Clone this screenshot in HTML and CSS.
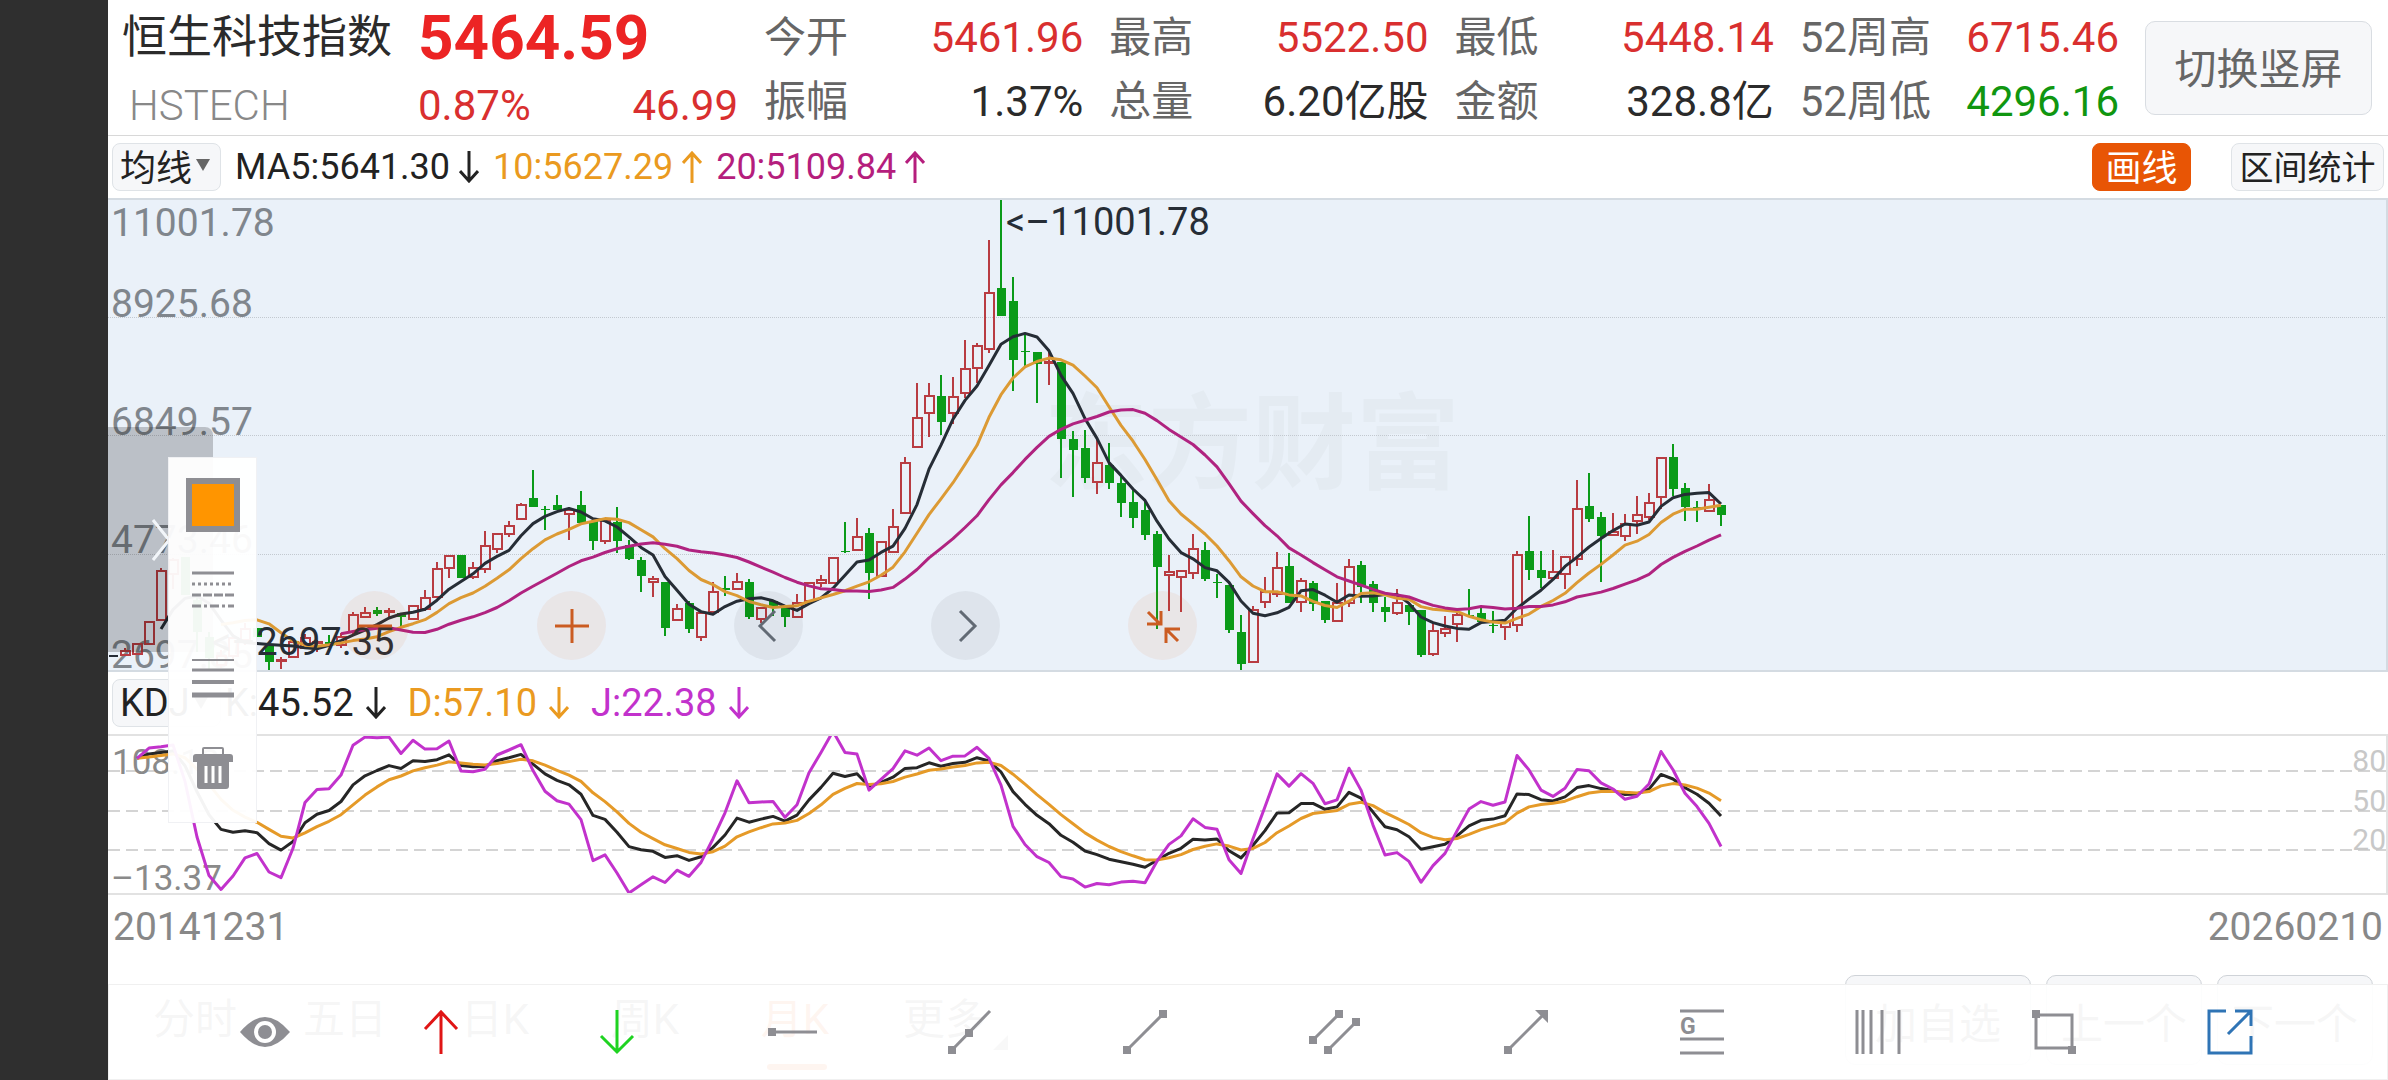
FILE: index.html
```html
<!DOCTYPE html>
<html lang="zh-CN">
<head>
<meta charset="utf-8">
<meta name="viewport" content="width=device-width, initial-scale=1">
<title>恒生科技指数 HSTECH</title>
<link rel="stylesheet" href="styles.css">
</head>
<body>
<div class="notch"></div>
<main class="screen">
  <header class="quote">
    <div class="name">
      <h1 class="name-title">恒生科技指数</h1>
      <div class="name-code">HSTECH</div>
    </div>
    <div class="price up">
      <strong class="price-last">5464.59</strong>
      <div class="price-change"><span>0.87%</span><span>46.99</span></div>
    </div>
    <dl class="stats">
      <div class="stat"><dt>今开</dt><dd class="up">5461.96</dd></div>
      <div class="stat"><dt>最高</dt><dd class="up">5522.50</dd></div>
      <div class="stat"><dt>最低</dt><dd class="up">5448.14</dd></div>
      <div class="stat"><dt>52周高</dt><dd class="up">6715.46</dd></div>
      <div class="stat"><dt>振幅</dt><dd>1.37%</dd></div>
      <div class="stat"><dt>总量</dt><dd>6.20亿股</dd></div>
      <div class="stat"><dt>金额</dt><dd>328.8亿</dd></div>
      <div class="stat"><dt>52周低</dt><dd class="down">4296.16</dd></div>
    </dl>
    <button class="rotate" type="button">切换竖屏</button>
  </header>

  <div class="indicator">
    <button class="chip chip-menu" type="button">均线<svg class="caret" viewBox="0 0 14 12"><path d="M0 0h14L7 12z"/></svg></button>
    <span class="reading ink">MA5:5641.30<svg class="arrow" viewBox="0 0 20 32"><path d="M10 0v30M1 20l9 10 9-10"/></svg></span>
    <span class="reading amber">10:5627.29<svg class="arrow" viewBox="0 0 20 32"><path d="M10 32V2M1 12l9-10 9 10"/></svg></span>
    <span class="reading magenta">20:5109.84<svg class="arrow" viewBox="0 0 20 32"><path d="M10 32V2M1 12l9-10 9 10"/></svg></span>
    <button class="chip chip-active" type="button">画线</button>
    <button class="chip chip-range" type="button">区间统计</button>
  </div>

  <section class="plot plot-main">
    <svg class="canvas canvas-main" id="price"></svg>
    <div class="controls">
      <button class="round warm" type="button" aria-label="缩小"><svg viewBox="0 0 34 34"><path d="M0 17h34"/></svg></button>
      <button class="round warm" type="button" aria-label="放大"><svg viewBox="0 0 34 34"><path d="M0 17h34M17 0v34"/></svg></button>
      <button class="round" type="button" aria-label="向左"><svg viewBox="0 0 34 34"><path d="M23 2L8 17l15 15"/></svg></button>
      <button class="round" type="button" aria-label="向右"><svg viewBox="0 0 34 34"><path d="M11 2l15 15-15 15"/></svg></button>
      <button class="round warm" type="button" aria-label="收起"><svg viewBox="0 0 34 34"><path d="M2 3l12 12M1 15h14V2M32 32L20 20M20 34V20h14"/></svg></button>
    </div>
  </section>

  <div class="indicator indicator-kdj">
    <button class="chip chip-menu" type="button">KDJ<svg class="caret" viewBox="0 0 14 12"><path d="M0 0h14L7 12z"/></svg></button>
    <span class="reading ink">K:45.52<svg class="arrow" viewBox="0 0 20 32"><path d="M10 0v30M1 20l9 10 9-10"/></svg></span>
    <span class="reading amber">D:57.10<svg class="arrow" viewBox="0 0 20 32"><path d="M10 0v30M1 20l9 10 9-10"/></svg></span>
    <span class="reading violet">J:22.38<svg class="arrow" viewBox="0 0 20 32"><path d="M10 0v30M1 20l9 10 9-10"/></svg></span>
  </div>

  <section class="plot plot-kdj">
    <svg class="canvas canvas-kdj" id="kdj"></svg>
  </section>

  <div class="dates"><span>20141231</span><span>20260210</span></div>

  <nav class="periods">
    <a class="period" href="#">分时</a>
    <a class="period" href="#">五日</a>
    <a class="period" href="#">日K</a>
    <a class="period" href="#">周K</a>
    <a class="period period-on" href="#">月K</a>
    <a class="period period-more" href="#">更多</a>
    <div class="steps">
      <button class="step" type="button">加自选</button>
      <button class="step" type="button">上一个</button>
      <button class="step" type="button">下一个</button>
    </div>
  </nav>

  <button class="handle" type="button" aria-label="收起面板"><svg viewBox="0 0 18 42"><path d="M1 1l16 20L1 41"/></svg></button>
  <aside class="styles">
    <button class="tool swatch" type="button" aria-label="颜色"></button>
    <button class="tool" type="button" aria-label="线型"><svg class="lines" viewBox="0 0 42 38"><path stroke-width="3" d="M0 2h42"/><path stroke-width="3" stroke-dasharray="3 3" d="M0 13h42"/><path stroke-width="3" stroke-dasharray="9 2" d="M0 24h42"/><path stroke-width="3" stroke-dasharray="9 3 3 3" d="M0 35h42"/></svg></button>
    <button class="tool" type="button" aria-label="线宽"><svg class="lines" viewBox="0 0 42 40"><path stroke-width="2" d="M0 1h42"/><path stroke-width="3" d="M0 11h42"/><path stroke-width="4" d="M0 23h42"/><path stroke-width="5" d="M0 36h42"/></svg></button>
    <button class="tool" type="button" aria-label="删除"><svg class="trash" viewBox="0 0 42 44"><path fill="none" stroke="#8e8e93" stroke-width="2" d="M11 9V3q0-1 1-1h18q1 0 1 1v6"/><path d="M1 11q0-3 3-3h34q3 0 3 3v5H1zM5 16h32v24q0 3-3 3H8q-3 0-3-3z"/><path stroke="#fff" stroke-width="3" d="M14 20v17M21 20v17M28 20v17"/></svg></button>
  </aside>

  <div class="toolbar">
    <button class="draw" type="button" aria-label="显示"><svg viewBox="0 0 44 44"><path class="fill" d="M-3 22Q10 7 22 7t25 15Q34 37 22 37T-3 22z"/><ellipse cx="22" cy="22" rx="11" ry="11" fill="#fff"/><circle class="fill" cx="22" cy="22" r="7"/></svg></button>
    <button class="draw" type="button" aria-label="看涨"><svg class="red" viewBox="0 0 44 44"><path d="M22 44V2M6 19L22 2l16 17"/></svg></button>
    <button class="draw" type="button" aria-label="看跌"><svg class="green" viewBox="0 0 44 44"><path d="M22 0v42M6 26l16 16 16-16"/></svg></button>
    <button class="draw" type="button" aria-label="水平线"><svg viewBox="0 0 44 44"><path d="M0 22h46"/><path class="fill" d="M-3 18h8v8h-8z"/></svg></button>
    <button class="draw" type="button" aria-label="射线"><svg viewBox="0 0 44 44"><path d="M5 40L43 1"/><path class="fill" d="M1 36h8v8H1zM18 19h8v8h-8z"/></svg></button>
    <button class="draw" type="button" aria-label="线段"><svg viewBox="0 0 44 44"><path d="M4 40L40 4"/><path class="fill" d="M0 36h8v8H0zM36 0h8v8h-8z"/></svg></button>
    <button class="draw draw-wide" type="button" aria-label="平行线"><svg viewBox="0 0 44 44"><path d="M0 30L26 4M15 40l28-28"/><path class="fill" d="M-4 26h8v8h-8zM22 0h8v8h-8zM11 36h8v8h-8zM39 8h8v8h-8z"/></svg></button>
    <button class="draw" type="button" aria-label="箭头"><svg viewBox="0 0 44 44"><path d="M4 40L40 4"/><path class="fill" d="M0 36h8v8H0zM31 0h13v13z"/></svg></button>
    <button class="draw" type="button" aria-label="黄金分割"><svg viewBox="0 0 44 44"><path d="M0 1h44M0 29h44M0 43h44"/><text class="glyph" x="0" y="24">G</text></svg></button>
    <button class="draw" type="button" aria-label="周期线"><svg viewBox="0 0 44 44"><path d="M1 0v44M7 0v44M15 0v44M26 0v44M43 0v44"/></svg></button>
    <button class="draw" type="button" aria-label="矩形"><svg viewBox="0 0 44 44"><path d="M4 5h36v33H4z"/><path class="fill" d="M0 0h8v8H0zM36 36h8v8h-8z"/></svg></button>
    <button class="draw" type="button" aria-label="分享"><svg class="blue" viewBox="0 0 44 44"><path d="M18 1H1v42h42V26M27 1h16v15M20 24L43 1"/></svg></button>
  </div>
</main>
<script src="chart.js"></script>
</body>
</html>
```

FILE: styles.css
```css
* {
  box-sizing: border-box;
}

body {
  margin: 0;
  display: flex;
  min-height: 100vh;
  background: #fff;
  color: #2b2b2b;
  font-family: Roboto, "Noto Sans CJK SC", sans-serif;
  font-size: 42px;
}

button {
  margin: 0;
  padding: 0;
  border: 0;
  background: none;
  color: inherit;
  font-family: inherit;
  font-size: inherit;
}

svg {
  display: block;
}

.notch {
  flex: none;
  width: 108px;
  background: #2f2f2f;
}

.screen {
  position: relative;
  flex: 1;
  min-width: 0;
}

.up { color: #d92f2f; }
.down { color: #109610; }
.ink { color: #222; }
.amber { color: #ea9a20; }
.magenta { color: #b51e7d; }
.violet { color: #c232cc; }

/* Quote header */
.quote {
  display: flex;
  align-items: flex-start;
  gap: 26px;
  padding: 0 16px 0 14px;
  border-bottom: 1px solid #d8d8d8;
}

.name {
  width: 270px;
  white-space: nowrap;
}

.name-title {
  margin: 0;
  font-size: 45px;
  font-weight: 400;
  line-height: 76px;
}

.name-code {
  padding-left: 7px;
  color: #888;
  font-weight: 300;
  line-height: 59px;
}

.price {
  width: 320px;
}

.price-last {
  display: block;
  color: #ec2424;
  font-size: 62px;
  font-weight: 700;
  line-height: 76px;
}

.price-change {
  display: flex;
  justify-content: space-between;
  line-height: 59px;
}

.stats {
  flex: 1;
  display: grid;
  grid-template-columns: repeat(4, 1fr);
  column-gap: 26px;
  margin: 0;
  padding-top: 6px;
  line-height: 64px;
}

.stat {
  display: flex;
  justify-content: space-between;
}

.stat dt {
  color: #666;
}

.stat dd {
  margin: 0;
}

.rotate {
  align-self: center;
  width: 227px;
  height: 94px;
  padding-bottom: 4px;
  border: 1px solid #d9dde2;
  border-radius: 10px;
  background: #f6f7f9;
  color: #666;
}

/* Indicator rows */
.indicator {
  display: flex;
  align-items: center;
  gap: 14px;
  height: 62px;
  padding: 0 4px;
  font-size: 36px;
}

.indicator-kdj {
  gap: 22px;
  font-size: 38px;
}

.indicator-kdj .chip {
  margin-right: -18px;
}

.indicator-kdj .reading {
  gap: 12px;
}

.chip {
  display: flex;
  align-items: center;
  justify-content: center;
  gap: 4px;
  width: 109px;
  height: 48px;
  padding-bottom: 4px;
  border: 1px solid #dfe3e7;
  border-radius: 8px;
  background: #f6f7f9;
  color: #222;
  white-space: nowrap;
}

.indicator-kdj .chip {
  padding-bottom: 0;
}

.chip-menu {
  justify-content: flex-start;
  padding-left: 7px;
}

.chip-active {
  width: 99px;
  margin-left: auto;
  margin-right: 26px;
  border-color: #e85505;
  background: #e85505;
  color: #fff;
}

.chip-range {
  width: 153px;
  font-size: 34px;
}

.caret {
  width: 14px;
  height: 12px;
  fill: #666;
}

.reading {
  display: flex;
  align-items: center;
  gap: 9px;
}

.arrow {
  width: 20px;
  height: 32px;
  fill: none;
  stroke: currentColor;
  stroke-width: 3;
}

/* Plots */
.plot {
  position: relative;
  border: solid #e2e2e2;
  border-width: 2px 2px 2px 0;
}

.plot-main {
  border-color: #d4dbe2;
  background: #eaf1f9;
}

.canvas {
  width: 100%;
  overflow: hidden;
}

.canvas-main { height: 470px; }
.canvas-kdj { height: 157px; }

.dotted { stroke: #c3c9d0; stroke-dasharray: 1 1; }
.dashed { stroke: #d4d4d4; stroke-width: 2; stroke-dasharray: 12 6; }

.watermark {
  fill: #e4ebf2;
  font-size: 104px;
  font-weight: 700;
}

.axis { fill: #80868d; font-size: 39px; }
.axis-kdj { fill: #8a8a8a; font-size: 35px; }
.axis-level { fill: #c8c8c8; font-size: 30px; text-anchor: end; }
.extreme { fill: #262d36; font-size: 38px; }

.wick-up, .body-up { stroke: #b83c42; stroke-width: 2; fill: none; }
.wick-down { stroke: #0b9b19; stroke-width: 2; }
.body-down { fill: #0b9b19; }
.body-flat { fill: #262d36; }

.line { fill: none; stroke-width: 3; stroke-linejoin: round; }
.line-ink { stroke: #262d36; }
.line-amber { stroke: #dc9a34; }
.line-magenta { stroke: #b02380; }
.line-k { stroke: #262626; }
.line-d { stroke: #e59a28; }
.line-j { stroke: #c232cc; }

.controls {
  position: absolute;
  left: 232px;
  bottom: 10px;
  display: flex;
  gap: 128px;
}

.round {
  display: flex;
  align-items: center;
  justify-content: center;
  width: 69px;
  height: 69px;
  border-radius: 50%;
  background: rgba(0, 0, 0, 0.05);
  color: #626a74;
}

.round svg {
  width: 34px;
  height: 34px;
  fill: none;
  stroke: currentColor;
  stroke-width: 3;
}

.warm {
  background: rgba(232, 85, 5, 0.07);
  color: #cb5c22;
}

.dates {
  display: flex;
  justify-content: space-between;
  padding: 0 5px;
  color: #888;
  font-size: 39px;
  line-height: 65px;
}

/* Period tabs */
.periods {
  display: flex;
  align-items: center;
  height: 120px;
  padding: 0 15px 0 12px;
}

.period {
  position: relative;
  width: 150px;
  color: #666;
  line-height: 88px;
  text-align: center;
  text-decoration: none;
}

.period-on {
  color: #e85505;
}

.period-on::after {
  content: "";
  position: absolute;
  left: 47px;
  bottom: -6px;
  width: 60px;
  height: 6px;
  border-radius: 3px;
  background: #e85505;
}

.period-more::after {
  content: "";
  position: absolute;
  right: 12px;
  bottom: 14px;
  border-left: 15px solid transparent;
  border-bottom: 15px solid #888;
}

.steps {
  display: flex;
  gap: 15px;
  margin-left: auto;
}

.step {
  height: 90px;
  padding: 0 14px;
  border: 1px solid #cfd3d8;
  border-radius: 10px;
  background: #f6f7f9;
  color: #666;
}

.step:first-child {
  padding: 0 29px;
}

/* Floating line-style panel */
.handle {
  position: absolute;
  left: 0;
  top: 427px;
  width: 105px;
  height: 225px;
  padding-left: 44px;
  border-radius: 0 8px 8px 0;
  background: rgba(0, 0, 0, 0.2);
}

.handle svg {
  width: 18px;
  height: 42px;
  fill: none;
  stroke: #f2f6fa;
  stroke-width: 3;
}

.styles {
  position: absolute;
  left: 60px;
  top: 457px;
  display: flex;
  flex-direction: column;
  align-items: center;
  gap: 39px;
  width: 89px;
  height: 366px;
  padding-top: 20px;
  border: 1px solid rgba(230, 232, 236, 0.6);
  background: rgba(255, 255, 255, 0.95);
}

.tool {
  height: 50px;
  display: flex;
  align-items: center;
}

.swatch {
  width: 54px;
  height: 54px;
  margin-bottom: -6px;
  border: 6px solid #8e8e93;
  background: #ff9500;
}

.lines {
  width: 42px;
  height: 40px;
  stroke: #8e8e93;
}

.trash {
  width: 42px;
  height: 44px;
  fill: #8e8e93;
}

/* Drawing toolbar */
.toolbar {
  position: absolute;
  left: 0;
  right: 0;
  bottom: 0;
  display: flex;
  align-items: center;
  justify-content: space-between;
  height: 96px;
  padding: 0 135px 0 134px;
  border: 1px solid #f0f0f0;
  background: rgba(255, 255, 255, 0.94);
}

.draw {
  display: flex;
  justify-content: center;
  width: 44px;
}

.draw-wide {
  width: 74px;
}

.draw svg {
  flex: none;
  width: 44px;
  height: 44px;
  overflow: visible;
  fill: none;
  stroke: #8e8e93;
  stroke-width: 3;
}

.draw .fill {
  fill: #8e8e93;
  stroke: none;
}

.draw ellipse {
  stroke: none;
}

.draw .glyph {
  fill: #8e8e93;
  stroke: none;
  font-size: 23px;
  font-weight: 700;
}

.draw .red { stroke: #e01515; }
.draw .green { stroke: #1fd321; }
.draw .blue { stroke: #2f74b5; }
```

FILE: chart.js
```js
// Monthly candles: [high, body top, body bottom, low, direction], in rows of the plot.
const candles = [
  [655,655,657,657,0],[648,651,655,656,1],[644,644,654,654,1],[622,622,644,644,1],[568,571,620,620,1],
  [558,560,574,589,1],[557,557,595,595,-1],[597,600,632,652,-1],[632,637,658,672,-1],[650,656,665,668,1],
  [634,638,656,660,1],[623,629,640,645,1],[628,628,637,637,-1],[646,646,662,671,-1],[657,660,661,669,1],
  [640,642,657,657,1],[634,638,648,648,1],[640,642,643,652,1],[635,642,644,647,-1],[633,637,645,648,1],
  [612,615,632,634,1],[607,613,617,617,1],[607,610,614,616,-1],[608,611,612,617,1],[613,613,617,627,-1],
  [606,606,619,619,1],[590,598,609,611,1],[562,569,597,597,1],[556,556,568,578,1],[555,555,578,578,-1],
  [562,568,577,579,1],[531,546,569,573,1],[534,534,549,553,1],[521,526,534,537,1],[503,505,519,519,1],
  [470,498,507,507,-1],[506,509,510,530,-1],[495,505,510,510,-1],[507,510,514,540,1],[491,505,523,523,-1],
  [521,521,541,550,-1],[520,520,541,544,1],[507,522,541,553,-1],[540,545,559,560,-1],[557,560,576,592,-1],
  [576,579,582,597,1],[582,582,628,636,-1],[604,609,620,620,1],[601,603,629,633,-1],[613,613,637,641,1],
  [582,592,612,612,1],[576,588,590,596,-1],[573,582,589,589,1],[579,582,617,619,-1],[608,608,619,623,1],
  [601,601,607,616,-1],[607,607,617,627,-1],[594,603,617,617,1],[583,583,601,601,1],[575,580,583,587,1],
  [558,558,583,583,1],[522,551,552,553,-1],[518,537,550,550,1],[528,533,573,599,-1],[542,542,576,576,1],
  [509,527,552,552,1],[457,463,513,513,1],[383,418,447,447,1],[383,396,413,437,1],[375,396,422,435,-1],
  [377,397,413,424,1],[340,369,393,398,1],[343,346,368,383,1],[240,293,349,353,1],[199,288,316,316,-1],
  [277,301,360,391,-1],[333,351,352,368,-1],[352,352,364,403,-1],[350,362,363,385,1],[362,362,439,478,-1],
  [431,439,450,497,-1],[430,448,478,483,-1],[440,463,482,494,1],[443,465,483,489,-1],[477,483,503,517,-1],
  [488,502,518,528,-1],[500,510,535,540,-1],[531,534,567,629,-1],[555,572,575,611,1],[571,571,577,612,1],
  [534,549,573,579,1],[542,550,579,581,-1],[574,582,583,598,-1],[585,585,630,633,-1],[615,632,664,670,-1],
  [606,610,662,662,1],[577,592,602,608,1],[552,568,594,597,1],[553,566,603,603,-1],[578,581,602,612,1],
  [581,583,604,611,-1],[601,601,620,623,-1],[583,603,621,621,1],[559,567,603,607,1],[561,565,587,603,-1],
  [581,584,603,612,-1],[597,607,612,622,-1],[589,603,613,615,1],[605,605,612,625,-1],[610,610,655,657,-1],
  [624,631,654,656,1],[616,629,633,637,1],[612,615,624,642,1],[589,615,616,617,-1],[607,613,622,622,-1],
  [611,625,626,633,-1],[622,622,627,640,1],[551,555,625,632,1],[516,551,570,580,-1],[551,570,578,588,-1],
  [550,572,578,580,1],[557,557,574,589,1],[480,509,559,566,1],[473,506,519,522,-1],[512,517,536,582,-1],
  [513,532,535,536,1],[514,524,536,541,1],[496,515,521,534,1],[493,503,517,520,1],[458,458,497,509,1],
  [444,457,489,496,-1],[483,488,507,521,-1],[501,507,509,522,-1],[484,500,511,511,1],[505,505,515,526,-1]
];

const PITCH = 12;
const FIRST = 5;
const PRICE_TOP = 200;
const KDJ_MID = 75;
const KDJ_UNIT = 1.317;

const centre = i => FIRST + i * PITCH;
const close = c => (c[4] > 0 ? c[1] : c[2]);
const path = (points, cls) => `<polyline class="line ${cls}" points="${points.map(p => p.join(",")).join(" ")}"/>`;
const text = (x, y, cls, value) => `<text class="${cls}" x="${x}" y="${y}">${value}</text>`;
const rule = (y, cls) => `<line class="${cls}" x1="0" x2="100%" y1="${y}" y2="${y}"/>`;

function average(n, cls) {
  const points = [];
  for (let i = n - 1; i < candles.length; i++) {
    let sum = 0;
    for (let j = i - n + 1; j <= i; j++) sum += close(candles[j]);
    points.push([centre(i), (sum / n - PRICE_TOP).toFixed(1)]);
  }
  return path(points, cls);
}

function candle(c, i) {
  const x = centre(i);
  const [high, top, bottom, low] = c.slice(0, 4).map(v => v - PRICE_TOP);
  if (c[4] === 0) return `<rect class="body-flat" x="${x - 4}" y="${top}" width="9" height="2"/>`;
  if (c[4] > 0) {
    return `<path class="wick-up" d="M${x} ${high}V${top}M${x} ${bottom}V${low}"/>` +
      `<rect class="body-up" x="${x - 4}" y="${top}" width="9" height="${bottom - top}"/>`;
  }
  return `<path class="wick-down" d="M${x} ${high}V${low}"/>` +
    `<rect class="body-down" x="${x - 4}" y="${top}" width="9" height="${bottom - top}"/>`;
}

function drawPrice() {
  let out = text(936, 281, "watermark", "东方财富");
  out += [117.5, 235.5, 354.5].map(y => rule(y, "dotted")).join("");
  out += text(3, 36, "axis", "11001.78") + text(3, 117, "axis", "8925.68") +
    text(3, 235, "axis", "6849.57") + text(3, 353, "axis", "4773.46") + text(3, 468, "axis", "2697.35");
  out += candles.map(candle).join("");
  out += average(5, "line-ink") + average(10, "line-amber") + average(20, "line-magenta");
  out += text(898, 35, "extreme", "&lt;–11001.78") + text(104, 455, "extreme", "&lt;–2697.35");
  document.getElementById("price").innerHTML = out;
}

function drawKdj() {
  const k = [], d = [], j = [];
  let kv = 90, dv = 90;
  const y = v => (KDJ_MID - (v - 50) * KDJ_UNIT).toFixed(1);
  for (let i = 2; i < candles.length; i++) {
    if (i > 2) {
      const span = candles.slice(Math.max(0, i - 8), i + 1);
      const high = Math.min(...span.map(c => c[0]));
      const low = Math.max(...span.map(c => c[3]));
      const rsv = (low - close(candles[i])) / (low - high) * 100;
      kv = (kv * 2 + rsv) / 3;
      dv = (dv * 2 + kv) / 3;
    }
    k.push([centre(i), y(kv)]);
    d.push([centre(i), y(dv)]);
    j.push([centre(i), y(3 * kv - 2 * dv)]);
  }
  let out = [35, 75, 114].map(v => rule(v, "dashed")).join("");
  out += text(4, 38, "axis-kdj", "108.12") + text(3, 154, "axis-kdj", "–13.37");
  out += text("100%", 35, "axis-level", "80") + text("100%", 75, "axis-level", "50") + text("100%", 114, "axis-level", "20");
  out += path(k, "line-k") + path(d, "line-d") + path(j, "line-j");
  document.getElementById("kdj").innerHTML = out;
}

drawPrice();
drawKdj();
```
